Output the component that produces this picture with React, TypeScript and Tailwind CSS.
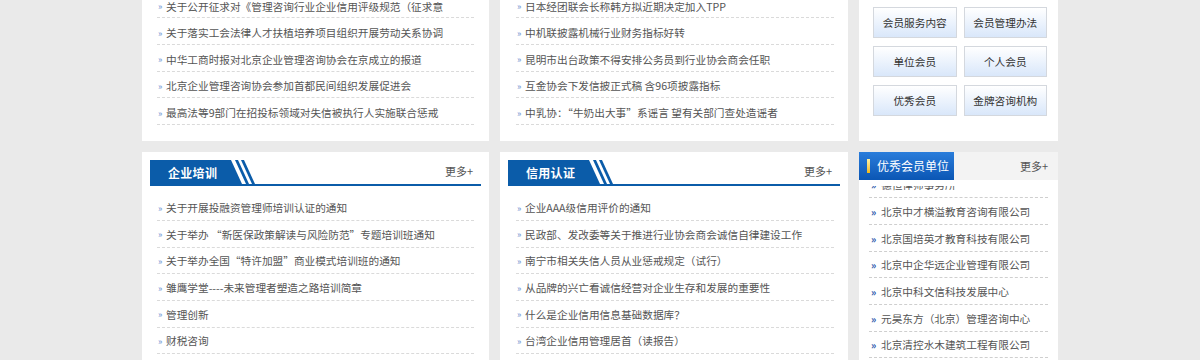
import type { ReactNode } from 'react';

const topLeft = [
  '关于公开征求对《管理咨询行业企业信用评级规范（征求意',
  '关于落实工会法律人才扶植培养项目组织开展劳动关系协调',
  '中华工商时报对北京企业管理咨询协会在京成立的报道',
  '北京企业管理咨询协会参加首都民间组织发展促进会',
  '最高法等9部门在招投标领域对失信被执行人实施联合惩戒',
];

const topMiddle = [
  '日本经团联会长称韩方拟近期决定加入TPP',
  '中机联披露机械行业财务指标好转',
  '昆明市出台政策不得安排公务员到行业协会商会任职',
  '互金协会下发信披正式稿 含96项披露指标',
  '中乳协：“牛奶出大事”系谣言 望有关部门查处造谣者',
];

const memberLinks = ['会员服务内容', '会员管理办法', '单位会员', '个人会员', '优秀会员', '金牌咨询机构'];

const training = [
  '关于开展投融资管理师培训认证的通知',
  '关于举办 “新医保政策解读与风险防范”专题培训班通知',
  '关于举办全国“特许加盟”商业模式培训班的通知',
  '雏鹰学堂----未来管理者塑造之路培训简章',
  '管理创新',
  '财税咨询',
];

const credit = [
  '企业AAA级信用评价的通知',
  '民政部、发改委等关于推进行业协会商会诚信自律建设工作',
  '南宁市相关失信人员从业惩戒规定（试行）',
  '从品牌的兴亡看诚信经营对企业生存和发展的重要性',
  '什么是企业信用信息基础数据库？',
  '台湾企业信用管理居首（读报告）',
];

const members = [
  '德恒律师事务所',
  '北京中才横溢教育咨询有限公司',
  '北京国培英才教育科技有限公司',
  '北京中企华远企业管理有限公司',
  '北京中科文信科技发展中心',
  '元昊东方（北京）管理咨询中心',
  '北京清控水木建筑工程有限公司',
];

function NewsRow({ text, top = false }: { text: string; top?: boolean }) {
  return (
    <li
      className={`flex h-[26.67px] items-center border-b border-dashed border-[#dadada] ${top ? 'pt-[4px]' : 'pt-[2px]'}`}
    >
      <span className="w-[9px] shrink-0 pl-[1px] text-[9px] leading-none text-[#6a8fd0]">»</span>
      <span className="whitespace-nowrap text-[10.67px] leading-[14px] text-[#555]">{text}</span>
    </li>
  );
}

function MemberRow({ text }: { text: string }) {
  return (
    <li className="flex h-[26.67px] items-center border-b border-dashed border-[#cfcfcf] pt-[2px]">
      <span className="w-[12px] shrink-0 pl-[2px] text-[10px] font-bold leading-none text-[#2452a8]">»</span>
      <span className="whitespace-nowrap text-[10.67px] leading-[14px] text-[#555]">{text}</span>
    </li>
  );
}

function Panel({ children, className = '' }: { children: ReactNode; className?: string }) {
  return <div className={`overflow-hidden bg-white ${className}`}>{children}</div>;
}

function SectionHeader({ title }: { title: string }) {
  return (
    <div className="flex h-[26px] items-end justify-between border-b-2 border-[#0b5ca9]">
      <div className="relative h-[24px] w-[106px]">
        <svg className="absolute left-0 top-0" width="106" height="24" viewBox="0 0 106 24">
          <polygon points="0,0 81,0 92,24 0,24" fill="#0b5ca9" />
          <polygon points="85,0 88,0 99,24 96,24" fill="#0b5ca9" />
          <polygon points="91,0 94,0 105,24 102,24" fill="#0b5ca9" />
        </svg>
        <span className="relative flex h-full items-center pl-[18px] pt-[2px] text-[12px] font-bold tracking-[0.3px] text-white">
          {title}
        </span>
      </div>
      <a className="pb-[5px] pr-[8px] text-[11px] text-[#555]">更多+</a>
    </div>
  );
}

export default function App() {
  return (
    <div className="h-[360px] overflow-hidden bg-[#eaeaea] font-['Noto_Sans_CJK_SC','Noto_Sans',sans-serif]">
      <div className="mx-auto grid w-[916px] grid-cols-[347px_348px_199px] gap-x-[11px] gap-y-[11px]">
        {/* top row, cut off by the window */}
        <Panel className="h-[141px] px-[15px]">
          <ul className="-mt-[8.33px]">
            {topLeft.map((t) => (
              <NewsRow key={t} text={t} top />
            ))}
          </ul>
        </Panel>
        <Panel className="h-[141px] pl-[16px] pr-[14px]">
          <ul className="-mt-[8.33px]">
            {topMiddle.map((t) => (
              <NewsRow key={t} text={t} top />
            ))}
          </ul>
        </Panel>
        <Panel className="h-[141px] pl-[14px] pr-[11px] pt-[7px]">
          <div className="grid grid-cols-2 gap-x-[7px] gap-y-[8px]">
            {memberLinks.map((m) => (
              <a
                key={m}
                className="flex h-[31px] items-center justify-center border border-[#d4d8de] bg-linear-to-b from-white to-[#d9e7fa] text-[10.67px] text-[#333]"
              >
                {m}
              </a>
            ))}
          </div>
        </Panel>

        {/* bottom row */}
        <Panel className="h-[220px] pt-[8px]">
          <div className="px-[8px]">
            <SectionHeader title="企业培训" />
          </div>
          <ul className="mt-[8.33px] px-[15px]">
            {training.map((t) => (
              <NewsRow key={t} text={t} />
            ))}
          </ul>
        </Panel>
        <Panel className="h-[220px] pt-[8px]">
          <div className="px-[8px]">
            <SectionHeader title="信用认证" />
          </div>
          <ul className="mt-[8.33px] pl-[16px] pr-[14px]">
            {credit.map((t) => (
              <NewsRow key={t} text={t} />
            ))}
          </ul>
        </Panel>
        <div className="h-[220px]">
          <div className="flex h-[28px] items-center justify-between bg-[#f3f3f3]">
            <div className="flex h-full w-[95px] items-center bg-linear-to-b from-[#2a7ddb] to-[#0a56b4]">
              <span className="ml-[8px] h-[14px] w-[3px] bg-linear-to-b from-[#fff2a0] to-[#f0b800]" />
              <span className="ml-[7px] text-[12px] text-white">优秀会员单位</span>
            </div>
            <a className="pr-[10px] text-[11px] text-[#555]">更多+</a>
          </div>
          {/* scrolling list, clipped a little below the header */}
          <div className="h-[192px] bg-white px-[10px] pt-[6px]">
            <div className="h-full overflow-hidden">
              <ul className="-mt-[14.37px]">
                {members.map((m) => (
                  <MemberRow key={m} text={m} />
                ))}
              </ul>
            </div>
          </div>
        </div>
      </div>
    </div>
  );
}
